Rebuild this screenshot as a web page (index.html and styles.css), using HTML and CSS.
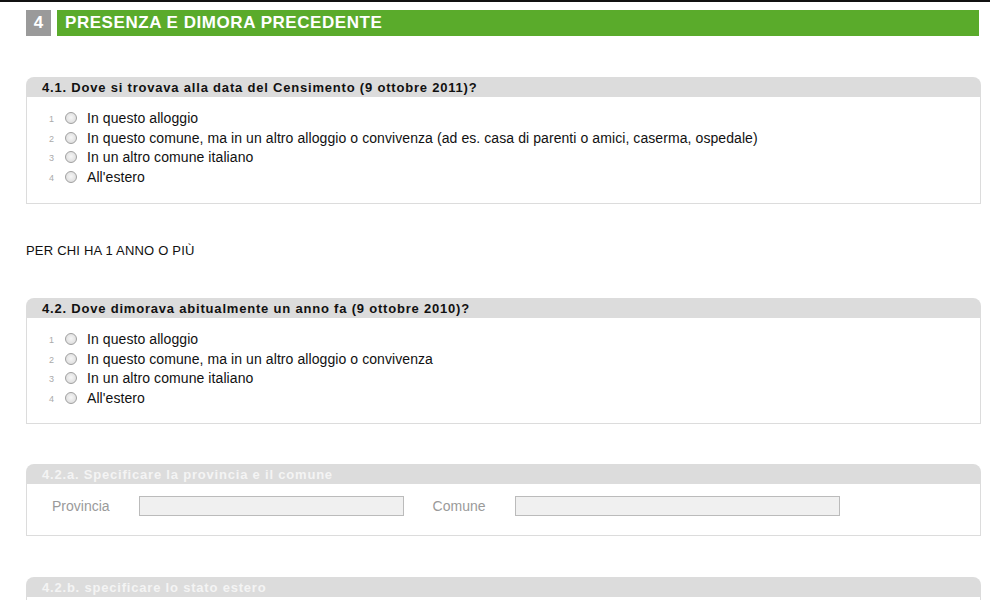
FILE: index.html
```html
<!DOCTYPE html>
<html lang="it">
<head>
<meta charset="utf-8">
<title>Presenza e dimora precedente</title>
<link rel="stylesheet" href="styles.css">
</head>
<body>
<div class="topline"></div>
<div class="page">
  <div class="section-head">
    <div class="section-num">4</div>
    <div class="section-title">PRESENZA E DIMORA PRECEDENTE</div>
  </div>

  <div class="q q1">
    <div class="q-head">4.1. Dove si trovava alla data del Censimento (9 ottobre 2011)?</div>
    <div class="q-body">
      <div class="opt"><span class="n">1</span><span class="radio"></span><span class="lbl">In questo alloggio</span></div>
      <div class="opt"><span class="n">2</span><span class="radio"></span><span class="lbl">In questo comune, ma in un altro alloggio o convivenza (ad es. casa di parenti o amici, caserma, ospedale)</span></div>
      <div class="opt"><span class="n">3</span><span class="radio"></span><span class="lbl">In un altro comune italiano</span></div>
      <div class="opt"><span class="n">4</span><span class="radio"></span><span class="lbl">All'estero</span></div>
    </div>
  </div>

  <div class="note">PER CHI HA 1 ANNO O PIÙ</div>

  <div class="q q2">
    <div class="q-head">4.2. Dove dimorava abitualmente un anno fa (9 ottobre 2010)?</div>
    <div class="q-body">
      <div class="opt"><span class="n">1</span><span class="radio"></span><span class="lbl">In questo alloggio</span></div>
      <div class="opt"><span class="n">2</span><span class="radio"></span><span class="lbl">In questo comune, ma in un altro alloggio o convivenza</span></div>
      <div class="opt"><span class="n">3</span><span class="radio"></span><span class="lbl">In un altro comune italiano</span></div>
      <div class="opt"><span class="n">4</span><span class="radio"></span><span class="lbl">All'estero</span></div>
    </div>
  </div>

  <div class="q q3 disabled">
    <div class="q-head">4.2.a. Specificare la provincia e il comune</div>
    <div class="q-body fields">
      <span class="flabel">Provincia</span>
      <span class="input in-prov"></span>
      <span class="flabel comune">Comune</span>
      <span class="input in-com"></span>
    </div>
  </div>

  <div class="q q4 disabled">
    <div class="q-head">4.2.b. specificare lo stato estero</div>
    <div class="q-body fields"></div>
  </div>
</div>
</body>
</html>
```

FILE: styles.css
```css
html, body {
  margin: 0;
  padding: 0;
  background: #ffffff;
  overflow: hidden;
}
body {
  font-family: "Liberation Sans", Arial, sans-serif;
  color: #111;
  width: 995px;
  height: 600px;
}
.topline {
  height: 2px;
  width: 990px;
  background: #111;
}
.page {
  padding: 8px 0 0 26px;
  width: 955px;
}
.section-head {
  display: flex;
  gap: 6px;
  height: 26px;
}
.section-num {
  width: 25px;
  background: #9a9a9a;
  color: #fff;
  font-weight: bold;
  font-size: 17px;
  display: flex;
  align-items: center;
  justify-content: center;
}
.section-title {
  flex: 1;
  margin-right: 2px;
  background: #5aab2b;
  color: #fff;
  font-weight: bold;
  font-size: 17px;
  letter-spacing: 0.55px;
  display: flex;
  align-items: center;
  padding-left: 8px;
}
.q {
  width: 955px;
}
.q1 { margin-top: 41px; }
.q2 { margin-top: 40px; }
.q3 { margin-top: 40px; }
.q4 { margin-top: 41px; }
.q-head {
  height: 20px;
  background: #dcdcdc;
  border-radius: 8px 8px 0 0;
  font-weight: bold;
  font-size: 13px;
  letter-spacing: 0.8px;
  line-height: 21px;
  padding-left: 16px;
  color: #111;
}
.q-body {
  border: 1px solid #dcdcdc;
  border-top: none;
  padding: 11px 0 16px 0;
}
.q2 .q-body {
  padding-bottom: 15px;
}
.opt {
  display: flex;
  align-items: center;
  height: 19.75px;
  font-size: 14px;
}
.n {
  width: 31px;
  text-align: right;
  font-size: 9px;
  color: #aaa;
  padding-right: 4px;
  box-sizing: border-box;
  padding-top: 2px;
}
.radio {
  width: 12px;
  height: 12px;
  border-radius: 50%;
  border: 1px solid #a0a0a0;
  background: radial-gradient(circle at 50% 45%, #f6f6f6 0%, #e0e0e0 70%, #d0d0d0 100%);
  box-sizing: border-box;
  margin-left: 7px;
  margin-right: 10px;
}
.lbl {
  color: #111;
  letter-spacing: 0.08px;
}
.note {
  margin-top: 39px;
  font-size: 13px;
  letter-spacing: 0.2px;
  height: 15px;
  line-height: 15px;
  color: #111;
}
.disabled .q-head {
  color: #f4f4f4;
}
.fields {
  height: 86px;
  box-sizing: border-box;
  padding: 12px 0 0 25px;
  display: flex;
  align-items: flex-start;
}
.q3 .fields { height: 52px; }
.flabel {
  font-size: 14px;
  color: #9a9a9a;
  line-height: 20px;
}
.input {
  height: 20px;
  box-sizing: border-box;
  border: 1px solid #bbbbbb;
  background: #f0f0f0;
}
.in-prov {
  width: 265px;
  margin-left: 29px;
}
.comune {
  margin-left: 29px;
}
.in-com {
  width: 325px;
  margin-left: 29px;
}
```
